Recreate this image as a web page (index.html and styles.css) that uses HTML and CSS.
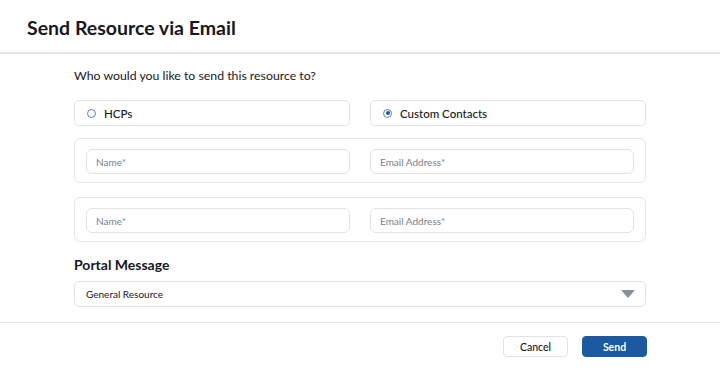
FILE: index.html
```html
<!DOCTYPE html>
<html lang="en">
<head>
    <meta charset="UTF-8">
    <meta name="viewport" content="width=device-width, initial-scale=1.0">
    <title>Send Resource via Email</title>
    <link rel="stylesheet" href="styles.css">
</head>
<body>
    <div class="modal">
        <header class="modal-header">
            <h1>Send Resource via Email</h1>
        </header>

        <main class="modal-body">
            <p class="question">Who would you like to send this resource to?</p>

            <div class="radio-row">
                <label class="radio-card">
                    <span class="radio"></span>
                    HCPs
                </label>
                <label class="radio-card">
                    <span class="radio checked"></span>
                    Custom Contacts
                </label>
            </div>

            <div class="contact-group">
                <input type="text" placeholder="Name*">
                <input type="text" placeholder="Email Address*">
            </div>
            <div class="contact-group">
                <input type="text" placeholder="Name*">
                <input type="text" placeholder="Email Address*">
            </div>

            <h2 class="section-title">Portal Message</h2>
            <div class="select">
                <span>General Resource</span>
                <span class="caret"></span>
            </div>
        </main>

        <footer class="modal-footer">
            <button class="btn">Cancel</button>
            <button class="btn primary">Send</button>
        </footer>
    </div>
</body>
</html>
```

FILE: styles.css
```css
body {
    margin: 0;
    font-family: Lato, "Open Sans", sans-serif;
    color: #16181d;
    background: #fff;
}
.modal {
    width: 720px;
    height: 370px;
    display: flex;
    flex-direction: column;
}
.modal-header {
    height: 52px;
    padding: 0 27px;
    display: flex;
    align-items: center;
    border-bottom: 2px solid #e3e6ea;
}
.modal-header h1 {
    margin: 2px 0 0;
    font-size: 19.5px;
    font-weight: 700;
}
.modal-body {
    width: 572px;
    margin: 0 auto;
    flex: 1;
}
.question {
    margin: 13px 0 15px;
    font-size: 12.3px;
    line-height: 18px;
}
.radio-row {
    display: grid;
    grid-template-columns: 276px 276px;
    justify-content: space-between;
}
.radio-card {
    height: 24px;
    border: 1px solid #dfe2e6;
    border-radius: 5px;
    display: flex;
    align-items: center;
    gap: 8px;
    padding: 0 12px;
    font-size: 11.5px;
    font-weight: 500;
}
.radio {
    width: 7px;
    height: 7px;
    border: 1px solid #5d7fb2;
    border-radius: 50%;
    position: relative;
}
.radio.checked::after {
    content: "";
    position: absolute;
    left: 1.5px;
    top: 1.5px;
    width: 4px;
    height: 4px;
    border-radius: 50%;
    background: #1b5aa0;
}
.contact-group {
    margin-top: 12px;
    border: 1px solid #e3e6ea;
    border-radius: 6px;
    padding: 10px 11px 8px;
    display: grid;
    grid-template-columns: 264px 264px;
    justify-content: space-between;
}
.contact-group + .contact-group {
    margin-top: 14px;
}
.contact-group input {
    height: 25px;
    box-sizing: border-box;
    border: 1px solid #dfe2e6;
    border-radius: 6px;
    padding: 0 9px;
    font-family: inherit;
    font-size: 10px;
    outline: none;
}
.contact-group input::placeholder {
    color: #7b8089;
}
.section-title {
    margin: 14px 0 7px;
    font-size: 14px;
    font-weight: 700;
    line-height: 18px;
}
.select {
    height: 24px;
    border: 1px solid #dfe2e6;
    border-radius: 5px;
    padding: 0 10px 0 11px;
    display: flex;
    align-items: center;
    justify-content: space-between;
    font-size: 10px;
}
.caret {
    width: 0;
    height: 0;
    border-left: 7px solid transparent;
    border-right: 7px solid transparent;
    border-top: 8px solid #8a8f99;
}
.modal-footer {
    border-top: 1px solid #e3e6ea;
    height: 47px;
    padding: 0 73px 0 0;
    display: flex;
    align-items: center;
    justify-content: flex-end;
    gap: 14px;
}
.btn {
    width: 65px;
    height: 21px;
    border: 1px solid #dfe2e6;
    border-radius: 4px;
    background: #fff;
    color: #16181d;
    font-family: inherit;
    font-size: 10.5px;
    font-weight: 500;
    cursor: pointer;
}
.btn.primary {
    background: #1b5aa0;
    border-color: #1b5aa0;
    color: #fff;
    font-weight: 700;
}
```
